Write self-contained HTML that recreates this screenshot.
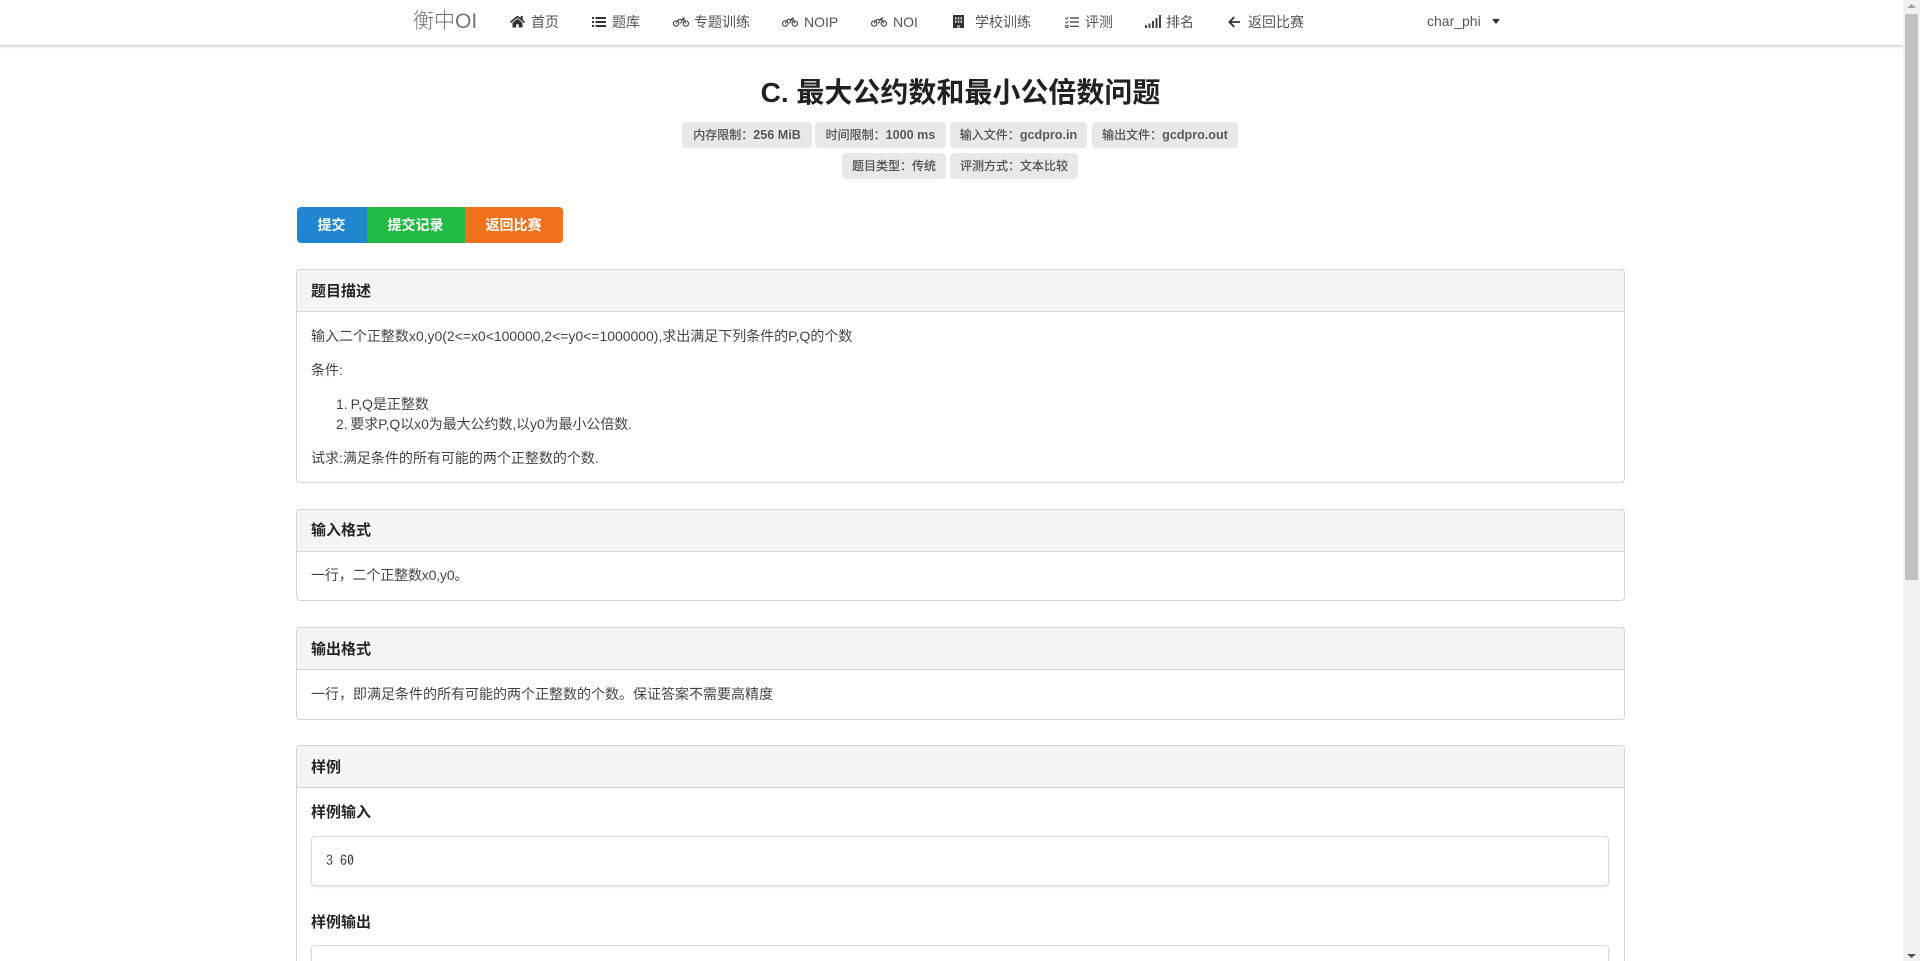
<!DOCTYPE html>
<html lang="zh-CN">
<head>
<meta charset="utf-8">
<title>C. 最大公约数和最小公倍数问题</title>
<style>
html,body{margin:0;padding:0;width:1920px;height:961px;overflow:hidden;background:#fff}
body{position:relative;font-family:"Liberation Sans","Noto Sans CJK SC",sans-serif;font-size:14px;color:rgba(0,0,0,.74)}
.t{position:absolute;white-space:nowrap;line-height:20px}
.nav{position:absolute;left:-1px;top:-1px;width:1903px;height:45px;background:#fff;border:1px solid #d4d4d5;box-shadow:0 1px 2px rgba(34,36,38,.15)}
.n{color:rgba(0,0,0,.68);font-size:14px;top:12px}
svg{position:absolute;display:block}
.lb{position:absolute;height:26px;line-height:26px;background:#e8e8e8;color:rgba(0,0,0,.62);border-radius:4px;font-size:12px;text-align:center;white-space:nowrap;-webkit-text-stroke:.25px rgba(0,0,0,.55)}
.lb b{font-weight:bold;font-size:12.6px;-webkit-text-stroke:0}
.btn{position:absolute;top:207px;height:36px;line-height:36px;color:#fff;font-weight:bold;text-align:center;font-size:14px;text-indent:-1px}
.card{position:absolute;left:296px;width:1329px;border:1px solid #d4d4d5;border-radius:4px;box-sizing:border-box;background:#fff}
.hd{height:42px;box-sizing:border-box;background:#f3f4f5;border-bottom:1px solid #d4d4d5;border-radius:3px 3px 0 0}
.h{font-weight:bold;font-size:15px;color:rgba(0,0,0,.85);margin-top:1px}
.pre{position:absolute;left:311px;width:1298px;box-sizing:border-box;background:#fff;border:1px solid rgba(34,36,38,.15);border-radius:4px;box-shadow:0 1px 2px rgba(34,36,38,.15)}
</style>
</head>
<body>
<div class="nav"></div>
<div class="t" style="left:413px;top:9px;font-size:21px;line-height:26px;color:rgba(0,0,0,.55);font-weight:300">衡中OI</div>

<svg style="left:510px;top:15px" width="15" height="13.4" viewBox="0 0 576 512" fill="#333"><path d="M280.37 148.26L96 300.11V464a16 16 0 0 0 16 16l112.06-.29a16 16 0 0 0 15.92-16V368a16 16 0 0 1 16-16h64a16 16 0 0 1 16 16v95.64a16 16 0 0 0 16 16.05L464 480a16 16 0 0 0 16-16V300L295.67 148.26a12.19 12.19 0 0 0-15.3 0zM571.6 251.47L488 182.56V44.05a12 12 0 0 0-12-12h-56a12 12 0 0 0-12 12v72.61L318.47 43a48 48 0 0 0-61 0L4.34 251.47a12 12 0 0 0-1.6 16.9l25.5 31A12 12 0 0 0 45.15 301l235.22-193.74a12.19 12.19 0 0 1 15.3 0L530.9 301a12 12 0 0 0 16.9-1.6l25.5-31a12 12 0 0 0-1.7-16.93z"/></svg>
<div class="t n" style="left:531px">首页</div>

<svg style="left:592px;top:16px" width="14" height="12" viewBox="0 0 14 12" fill="#333"><rect x="0" y="1" width="2" height="2"/><rect x="3.5" y="1" width="10.5" height="2"/><rect x="0" y="5" width="2" height="2"/><rect x="3.5" y="5" width="10.5" height="2"/><rect x="0" y="9" width="2" height="2"/><rect x="3.5" y="9" width="10.5" height="2"/></svg>
<div class="t n" style="left:612px">题库</div>

<svg style="left:673px;top:17px" width="16" height="10" viewBox="0 0 16 10" fill="none" stroke="#444" stroke-width="1.1"><circle cx="3.2" cy="6.5" r="2.7"/><circle cx="12.8" cy="6.5" r="2.7"/><path d="M3.2 6.5L5.8 2.6H10.8L12.8 6.5M7.5 6.5L10.2 1.2H12"/></svg>
<div class="t n" style="left:694px">专题训练</div>

<svg style="left:782px;top:17px" width="16" height="10" viewBox="0 0 16 10" fill="none" stroke="#444" stroke-width="1.1"><circle cx="3.2" cy="6.5" r="2.7"/><circle cx="12.8" cy="6.5" r="2.7"/><path d="M3.2 6.5L5.8 2.6H10.8L12.8 6.5M7.5 6.5L10.2 1.2H12"/></svg>
<div class="t n" style="left:804px">NOIP</div>

<svg style="left:871px;top:17px" width="16" height="10" viewBox="0 0 16 10" fill="none" stroke="#444" stroke-width="1.1"><circle cx="3.2" cy="6.5" r="2.7"/><circle cx="12.8" cy="6.5" r="2.7"/><path d="M3.2 6.5L5.8 2.6H10.8L12.8 6.5M7.5 6.5L10.2 1.2H12"/></svg>
<div class="t n" style="left:893px">NOI</div>

<svg style="left:953px;top:15px" width="11" height="13" viewBox="0 0 11 13"><rect width="11" height="13" fill="#333"/><g fill="#ccc"><rect x="2" y="2" width="1.5" height="6"/><rect x="4.8" y="2" width="1.5" height="6"/><rect x="7.5" y="2" width="1.5" height="6"/></g><rect x="2" y="4.4" width="7" height="1" fill="#333"/><rect x="4" y="10" width="3" height="3" fill="#999"/></svg>
<div class="t n" style="left:975px">学校训练</div>

<svg style="left:1065px;top:16px" width="14" height="12" viewBox="0 0 14 12" fill="none" stroke="#555"><path d="M.3 2L1.4 3.1 3.2.9M.3 6L1.4 7.1 3.2 4.9M.6 9.5h2.4v2H.6z" stroke-width="1"/><path d="M5 2H14M5 6H14M5 10.3H14" stroke-width="1.4"/></svg>
<div class="t n" style="left:1085px">评测</div>

<svg style="left:1145px;top:15px" width="17" height="13" viewBox="0 0 17 13" fill="#444"><rect x="0" y="10" width="2" height="3"/><rect x="3.5" y="8.5" width="2" height="4.5"/><rect x="7" y="6" width="2" height="7"/><rect x="10.5" y="3" width="2" height="10"/><rect x="14" y="0" width="2" height="13"/></svg>
<div class="t n" style="left:1166px">排名</div>

<svg style="left:1228px;top:16px" width="12" height="12" viewBox="0 0 12 12" fill="none" stroke="#333" stroke-width="1.8"><path d="M6.2 1L1.4 6l4.8 5M1.6 6H12"/></svg>
<div class="t n" style="left:1248px">返回比赛</div>

<div class="t n" style="left:1427px;top:11px;font-size:14px">char_phi</div>
<svg style="left:1492px;top:19px" width="8" height="5" viewBox="0 0 8 5" fill="#333"><path d="M0 0h8L4 5z"/></svg>

<div class="t" style="left:296px;width:1329px;top:73px;line-height:40px;font-size:28px;font-weight:bold;text-align:center;color:rgba(0,0,0,.87)">C. 最大公约数和最小公倍数问题</div>

<div class="lb" style="left:682px;top:122px;width:130px">内存限制：<b>256 MiB</b></div>
<div class="lb" style="left:815px;top:122px;width:131px">时间限制：<b>1000 ms</b></div>
<div class="lb" style="left:950px;top:122px;width:137px">输入文件：<b>gcdpro.in</b></div>
<div class="lb" style="left:1092px;top:122px;width:146px">输出文件：<b>gcdpro.out</b></div>
<div class="lb" style="left:842px;top:153px;width:104px">题目类型：传统</div>
<div class="lb" style="left:950px;top:153px;width:128px">评测方式：文本比较</div>

<div class="btn" style="left:297px;width:70px;background:#2185d0;border-radius:4px 0 0 4px">提交</div>
<div class="btn" style="left:367px;width:98px;background:#21ba45">提交记录</div>
<div class="btn" style="left:465px;width:98px;background:#f2711c;border-radius:0 4px 4px 0">返回比赛</div>

<div class="card" style="top:269px;height:214px"><div class="hd"></div></div>
<div class="t h" style="left:311px;top:281px">题目描述</div>
<div class="t" style="left:311px;top:326px;letter-spacing:-.02px">输入二个正整数x0,y0(2&lt;=x0&lt;100000,2&lt;=y0&lt;=1000000),求出满足下列条件的P,Q的个数</div>
<div class="t" style="left:311px;top:360px">条件:</div>
<div class="t" style="left:336px;top:394px;word-spacing:-1px">1. P,Q是正整数</div>
<div class="t" style="left:336px;top:414px;word-spacing:-1px;letter-spacing:-.08px">2. 要求P,Q以x0为最大公约数,以y0为最小公倍数.</div>
<div class="t" style="left:311px;top:448px">试求:满足条件的所有可能的两个正整数的个数.</div>

<div class="card" style="top:509px;height:92px"><div class="hd"></div></div>
<div class="t h" style="left:311px;top:520px">输入格式</div>
<div class="t" style="left:311px;top:565px;letter-spacing:-.15px">一行，二个正整数x0,y0。</div>

<div class="card" style="top:627px;height:93px"><div class="hd"></div></div>
<div class="t h" style="left:311px;top:639px">输出格式</div>
<div class="t" style="left:311px;top:684px">一行，即满足条件的所有可能的两个正整数的个数。保证答案不需要高精度</div>

<div class="card" style="top:745px;height:260px"><div class="hd"></div></div>
<div class="t h" style="left:311px;top:757px">样例</div>
<div class="t h" style="left:311px;top:802px">样例输入</div>
<div class="pre" style="top:836px;height:50px"></div>
<div class="t" style="left:326px;top:850px;font-family:'IPAGothic','Liberation Mono',monospace;font-size:14px;color:rgba(0,0,0,.8)">3 60</div>
<div class="t h" style="left:311px;top:912px">样例输出</div>
<div class="pre" style="top:945px;height:60px"></div>

<div style="position:absolute;left:1903px;top:0;width:17px;height:961px;background:#f1f1f1"></div>
<div style="position:absolute;left:1905px;top:14px;width:13px;height:566px;background:#c1c1c1"></div>
<svg style="left:1907px;top:4px" width="9" height="4" viewBox="0 0 9 4" fill="#a3a3a3"><path d="M0 4h9L4.5 0z"/></svg>
<svg style="left:1907px;top:954px" width="9" height="4" viewBox="0 0 9 4" fill="#505050"><path d="M0 0h9L4.5 4z"/></svg>
</body>
</html>
